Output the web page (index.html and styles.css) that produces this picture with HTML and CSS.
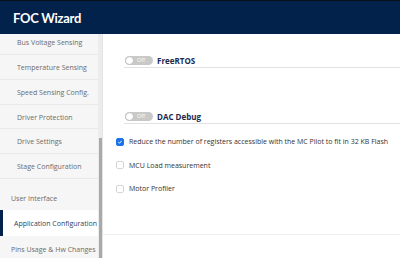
FILE: index.html
```html
<!DOCTYPE html>
<html lang="en">
<head>
    <title>FOC Wizard</title>
    <link rel="stylesheet" href="styles.css">
</head>
<body>
    <header class="topbar">
        <h1>FOC Wizard</h1>
    </header>

    <div class="layout">
        <aside class="sidebar">
            <nav class="nav">
                <a class="nav-sub">Bus Voltage Sensing</a>
                <a class="nav-sub">Temperature Sensing</a>
                <a class="nav-sub">Speed Sensing Config.</a>
                <a class="nav-sub">Driver Protection</a>
                <a class="nav-sub">Drive Settings</a>
                <a class="nav-sub">Stage Configuration</a>
                <a class="nav-item">User Interface</a>
                <a class="nav-item active">Application Configuration</a>
                <a class="nav-item">Pins Usage &amp; Hw Changes</a>
            </nav>
            <div class="scroll-track"><div class="scroll-thumb"></div></div>
        </aside>

        <main class="content">
            <div class="option-row">
                <span class="toggle"><span class="knob"></span><span class="toggle-text">Off</span></span>
                <span class="option-label">FreeRTOS</span>
            </div>
            <div class="option-row">
                <span class="toggle"><span class="knob"></span><span class="toggle-text">Off</span></span>
                <span class="option-label">DAC Debug</span>
            </div>

            <div class="checks">
                <label class="check-row">
                    <span class="checkbox checked">
                        <svg viewBox="0 0 8 8" width="8" height="8"><path d="M1.8 4.2 L3.3 5.6 L6.2 2.5" fill="none" stroke="#fff" stroke-width="1.3"/></svg>
                    </span>
                    Reduce the number of registers accessible with the MC Pilot to fit in 32 KB Flash
                </label>
                <label class="check-row">
                    <span class="checkbox"></span>
                    MCU Load measurement
                </label>
                <label class="check-row">
                    <span class="checkbox"></span>
                    Motor Profiler
                </label>
            </div>

            <div class="footer-line"></div>
        </main>
    </div>
</body>
</html>
```

FILE: styles.css
```css
:root {
    --navy: #02214b;
    --side-bg: #f6f6f6;
    --side-line: #e9e9e9;
    --text-grey: #6b6b6b;
    --blue: #1a73e8;
}

* {
    box-sizing: border-box;
}

body {
    margin: 0;
    width: 400px;
    height: 258px;
    overflow: hidden;
    font-family: "Open Sans", "Noto Sans", sans-serif;
    background-color: #fff;
}

.topbar {
    height: 34px;
    background-color: var(--navy);
    border-top: 1px solid #0b0f1a;
    padding-left: 13px;
    display: flex;
    align-items: center;
}

.topbar h1 {
    margin: 0;
    color: #fff;
    font-family: "Lato", "Open Sans", sans-serif;
    font-size: 13px;
    font-weight: 700;
    letter-spacing: -0.3px;
}

.layout {
    display: flex;
    height: 224px;
}

.sidebar {
    width: 103px;
    display: flex;
    flex-shrink: 0;
}

.nav {
    width: 98px;
    background-color: var(--side-bg);
    display: flex;
    flex-direction: column;
}

.nav a {
    display: block;
    font-size: 7px;
    color: var(--text-grey);
    white-space: nowrap;
    flex-shrink: 0;
}

.nav-sub {
    height: 24.8px;
    padding-top: 3px;
    line-height: 20.8px;
    padding-left: 17px;
    border-bottom: 1px solid var(--side-line);
}

.nav-sub:first-child {
    height: 21px;
    padding-top: 0;
    line-height: 18px;
}

.nav-item {
    height: 25px;
    padding-top: 2px;
    line-height: 23px;
    padding-left: 11px;
}

.nav-sub + .nav-item {
    margin-top: 6px;
}

.nav-item.active {
    background-color: #fff;
    color: #2d3f66;
    border-left: 3px solid var(--navy);
    height: 26px;
    line-height: 24px;
}

.scroll-track {
    width: 5px;
    background-color: #ececec;
    border-right: 1px solid #e4e4e4;
    position: relative;
}

.scroll-thumb {
    position: absolute;
    left: 1px;
    right: 0;
    top: 104px;
    bottom: 0;
    background-color: #a9a9a9;
}

.content {
    flex: 1;
    padding-top: 19px;
}

.option-row {
    margin-left: 21px;
    height: 15px;
    display: flex;
    align-items: center;
    gap: 4px;
    padding-left: 1px;
    border-bottom: 1px solid #e2e2e2;
    margin-bottom: 41px;
}

.toggle {
    width: 28px;
    height: 9px;
    border-radius: 5px;
    background-color: #c9c9c9;
    display: flex;
    align-items: center;
}

.knob {
    width: 9px;
    height: 9px;
    border-radius: 50%;
    background-color: #fff;
    border: 1px solid #bdbdbd;
}

.toggle-text {
    font-size: 5.5px;
    color: #fff;
    margin-left: 3px;
}

.option-label {
    font-size: 8px;
    font-weight: 700;
    color: #1b2a4e;
}

.checks {
    margin-top: -28px;
    padding-left: 13px;
    display: flex;
    flex-direction: column;
    gap: 14.5px;
}

.check-row {
    display: flex;
    align-items: center;
    gap: 5px;
    font-size: 7px;
    color: #333;
    height: 9px;
    white-space: nowrap;
}

.checkbox {
    width: 8px;
    height: 8px;
    border: 1px solid #d6d6d6;
    border-radius: 2px;
    background-color: #fff;
    display: flex;
    align-items: center;
    justify-content: center;
}

.checkbox.checked {
    background-color: var(--blue);
    border-color: var(--blue);
}

.footer-line {
    margin-top: 41px;
    border-top: 1px solid #eeeeee;
}
```
